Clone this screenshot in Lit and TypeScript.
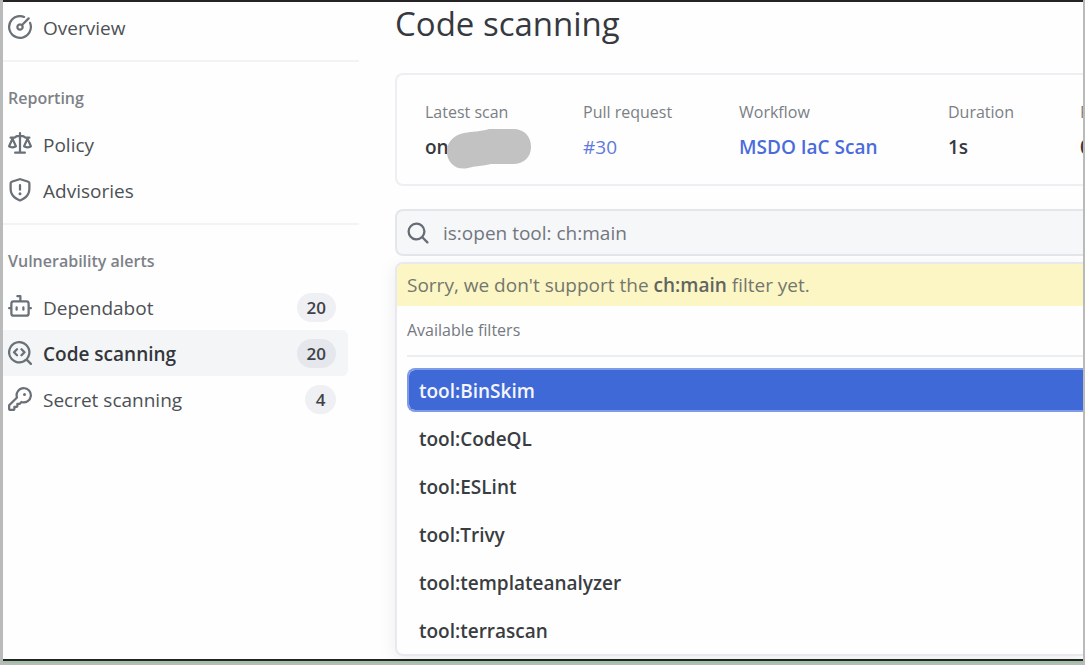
import { LitElement, html, css, svg } from "lit";
import { customElement, property, state } from "lit/decorators.js";

const ICONS: Record<string, string> = {
  meter:
    "M8 1.5a6.5 6.5 0 1 0 6.016 4.035.75.75 0 0 1 1.388-.57 8 8 0 1 1-4.37-4.37.75.75 0 0 1-.569 1.389A6.479 6.479 0 0 0 8 1.5Zm6.28.22a.75.75 0 0 1 0 1.06l-4.063 4.064a2.5 2.5 0 1 1-1.06-1.06L13.22 1.72a.75.75 0 0 1 1.06 0ZM7 8a1 1 0 1 0 2 0 1 1 0 0 0-2 0Z",
  law: "M8.75.75V2h.985c.304 0 .603.08.867.231l1.29.736c.038.022.08.033.124.033h2.234a.75.75 0 0 1 0 1.5h-.427l2.111 4.692a.75.75 0 0 1-.154.838l-.53-.53.529.531-.001.002-.002.002-.006.006-.006.005-.01.01-.045.04c-.21.176-.441.327-.686.45C14.556 10.78 13.88 11 13 11a4.498 4.498 0 0 1-2.023-.454 3.544 3.544 0 0 1-.686-.45l-.045-.04-.016-.015-.006-.006-.004-.004v-.001a.75.75 0 0 1-.154-.838L12.178 4.5h-.162c-.305 0-.604-.079-.868-.231l-1.29-.736a.245.245 0 0 0-.124-.033H8.75V13h2.5a.75.75 0 0 1 0 1.5h-6.5a.75.75 0 0 1 0-1.5h2.5V3.5h-.984a.245.245 0 0 0-.124.033l-1.289.737c-.265.15-.564.23-.869.23h-.162l2.112 4.692a.75.75 0 0 1-.154.838l-.53-.53.529.531-.001.002-.002.002-.006.006-.016.015-.045.04c-.21.176-.441.327-.686.45C4.556 10.78 3.88 11 3 11a4.498 4.498 0 0 1-2.023-.454 3.544 3.544 0 0 1-.686-.45l-.045-.04-.016-.015-.006-.006-.004-.004v-.001a.75.75 0 0 1-.154-.838L2.178 4.5H1.75a.75.75 0 0 1 0-1.5h2.234a.249.249 0 0 0 .125-.033l1.288-.737c.265-.15.564-.23.869-.23h.984V.75a.75.75 0 0 1 1.5 0Zm2.945 8.477c.285.135.718.273 1.305.273s1.02-.138 1.305-.273L13 6.327Zm-10 0c.285.135.718.273 1.305.273s1.02-.138 1.305-.273L3 6.327Z",
  shield:
    "M7.467.133a1.748 1.748 0 0 1 1.066 0l5.25 1.68A1.75 1.75 0 0 1 15 3.48V7c0 1.566-.32 3.182-1.303 4.682-.983 1.498-2.585 2.813-5.032 3.855a1.697 1.697 0 0 1-1.33 0c-2.447-1.042-4.049-2.357-5.032-3.855C1.32 10.182 1 8.566 1 7V3.48a1.75 1.75 0 0 1 1.217-1.667Zm.61 1.429a.25.25 0 0 0-.153 0l-5.25 1.68a.25.25 0 0 0-.174.238V7c0 1.358.275 2.666 1.057 3.86.784 1.194 2.121 2.34 4.366 3.297a.196.196 0 0 0 .154 0c2.245-.956 3.582-2.104 4.366-3.298C13.225 9.666 13.5 8.36 13.5 7V3.48a.251.251 0 0 0-.174-.237l-5.25-1.68ZM8.75 4.75v3a.75.75 0 0 1-1.5 0v-3a.75.75 0 0 1 1.5 0ZM9 10.5a1 1 0 1 1-2 0 1 1 0 0 1 2 0Z",
  dependabot:
    "M5.75 7.5a.75.75 0 0 1 .75.75v1.5a.75.75 0 0 1-1.5 0v-1.5a.75.75 0 0 1 .75-.75Zm5.25.75a.75.75 0 0 0-1.5 0v1.5a.75.75 0 0 0 1.5 0v-1.5ZM6.25 0h2A.75.75 0 0 1 9 .75V3.5h3.25a2.25 2.25 0 0 1 2.25 2.25V8h.75a.75.75 0 0 1 0 1.5h-.75v2.75a2.25 2.25 0 0 1-2.25 2.25h-8.5a2.25 2.25 0 0 1-2.25-2.25V9.5H.75a.75.75 0 0 1 0-1.5h.75V5.75A2.25 2.25 0 0 1 3.75 3.5H7.5v-2H6.25a.75.75 0 0 1 0-1.5ZM3 5.75v6.5c0 .414.336.75.75.75h8.5a.75.75 0 0 0 .75-.75v-6.5a.75.75 0 0 0-.75-.75h-8.5a.75.75 0 0 0-.75.75Z",
  codescan:
    "M8.47 4.97a.75.75 0 0 0 0 1.06L9.94 7.5 8.47 8.97a.75.75 0 1 0 1.06 1.06l2-2a.75.75 0 0 0 0-1.06l-2-2a.75.75 0 0 0-1.06 0ZM6.53 6.03a.75.75 0 0 0-1.06-1.06l-2 2a.75.75 0 0 0 0 1.06l2 2a.75.75 0 1 0 1.06-1.06L5.06 7.5l1.47-1.47ZM12.246 13.307a7.501 7.501 0 1 1 1.06-1.06l2.474 2.473a.749.749 0 1 1-1.06 1.06ZM1.5 7.5a6.002 6.002 0 0 0 3.608 5.504 6.002 6.002 0 0 0 6.486-1.117.748.748 0 0 1 .292-.293A6 6 0 1 0 1.5 7.5Z",
  key: "M10.5 0a5.499 5.499 0 1 1-1.288 10.848l-.932.932a.749.749 0 0 1-.53.22H7v.75a.749.749 0 0 1-.22.53l-.5.5a.749.749 0 0 1-.53.22H5v.75a.749.749 0 0 1-.22.53l-.5.5a.749.749 0 0 1-.53.22h-2A1.75 1.75 0 0 1 0 14.25v-2c0-.199.079-.389.22-.53l4.932-4.932A5.5 5.5 0 0 1 10.5 0Zm-4 5.5c-.001.431.069.86.205 1.269a.75.75 0 0 1-.181.768L1.5 12.56v1.69c0 .138.112.25.25.25h1.69l.06-.06v-1.19a.75.75 0 0 1 .75-.75h1.19l.06-.06v-1.19a.75.75 0 0 1 .75-.75h1.19l1.023-1.025a.75.75 0 0 1 .768-.18A4 4 0 1 0 6.5 5.5ZM11 6a1 1 0 1 1 0-2 1 1 0 0 1 0 2Z",
  search:
    "M10.68 11.74a6 6 0 0 1-7.922-8.982 6 6 0 0 1 8.982 7.922l3.04 3.04a.749.749 0 1 1-1.06 1.06ZM11.5 7a4.499 4.499 0 1 0-8.997 0A4.499 4.499 0 0 0 11.5 7Z",
};

const icon = (name: string) => html`<svg
  class="icon"
  viewBox="0 0 16 16"
  aria-hidden="true"
>
  ${svg`<path fill="currentColor" fill-rule="evenodd" d=${ICONS[name]}></path>`}
</svg>`;

@customElement("side-nav")
export class SideNav extends LitElement {
  @property() current = "Code scanning";

  static styles = css`
    :host {
      display: block;
      padding-top: 2px;
    }
    .group {
      display: flex;
      flex-direction: column;
    }
    .group + .group {
      margin-top: 10px;
      border-top: 2px solid #f3f3f4;
      padding-top: 24px;
    }
    .title {
      margin: 0 0 11px;
      padding-left: 5px;
      font-size: 16px;
      line-height: 24px;
      font-weight: 600;
      color: #7d8187;
    }
    .item {
      display: flex;
      align-items: center;
      gap: 11px;
      height: 46px;
      margin-right: 11px;
      padding: 0 12px 0 5px;
      border-radius: 0 6px 6px 0;
      font-size: 19px;
      color: #4d5155;
      text-decoration: none;
    }
    .item.active {
      background: #f4f5f7;
      color: #33373c;
      font-weight: 600;
    }
    .icon {
      width: 24px;
      height: 24px;
      flex: none;
      color: #6a7077;
    }
    .label {
      flex: 1;
      padding-top: 2px;
    }
    .count {
      min-width: 31px;
      padding: 0 10px;
      box-sizing: border-box;
      border-radius: 15px;
      background: #eff0f3;
      color: #3f4347;
      font-size: 17px;
      line-height: 29px;
      font-weight: 600;
      text-align: center;
    }
    .active .count {
      background: #e6e7ec;
    }
  `;

  private groups = [
    { title: "", items: [{ icon: "meter", label: "Overview" }] },
    {
      title: "Reporting",
      items: [
        { icon: "law", label: "Policy" },
        { icon: "shield", label: "Advisories" },
      ],
    },
    {
      title: "Vulnerability alerts",
      items: [
        { icon: "dependabot", label: "Dependabot", count: 20 },
        { icon: "codescan", label: "Code scanning", count: 20 },
        { icon: "key", label: "Secret scanning", count: 4 },
      ],
    },
  ] as { title: string; items: { icon: string; label: string; count?: number }[] }[];

  render() {
    return html`<nav aria-label="Security">
      ${this.groups.map(
        (g) => html`<div class="group">
          ${g.title ? html`<h2 class="title">${g.title}</h2>` : ""}
          ${g.items.map(
            (i) => html`<a
              class="item ${i.label === this.current ? "active" : ""}"
              href="#"
              >${icon(i.icon)}<span class="label">${i.label}</span>${i.count
                ? html`<span class="count">${i.count}</span>`
                : ""}</a
            >`
          )}
        </div>`
      )}
    </nav>`;
  }
}

@customElement("scan-summary")
export class ScanSummary extends LitElement {
  static styles = css`
    .card {
      display: grid;
      grid-template-columns: 158px 156px 209px 132px 1fr;
      margin: 0;
      padding: 25px 0 22px 28px;
      border: 2px solid #eeeef3;
      border-right: 0;
      border-radius: 8px 0 0 8px;
    }
    .stat {
      min-width: 0;
      white-space: nowrap;
    }
    .name {
      font-size: 16px;
      line-height: 24px;
      color: #7b7f85;
    }
    .value {
      display: flex;
      align-items: center;
      margin: 8px 0 0;
      height: 30px;
      font-size: 19px;
      font-weight: 600;
      color: #36393e;
    }
    .link {
      color: #4a6bdc;
      text-decoration: none;
    }
    .light {
      font-weight: 500;
      color: #6079dc;
    }
    .redaction {
      width: 86px;
      height: 44px;
      flex: none;
      margin: 0 0 0 -3px;
    }
  `;

  render() {
    return html`<dl class="card">
      <div class="stat">
        <dt class="name">Latest scan</dt>
        <dd class="value">
          on<svg class="redaction" viewBox="0 0 86 44" aria-hidden="true">
            <path
              fill="#c2c2c2"
              d="M1 25C2 16 8 10 18 8C27 6 34 7 43 4H67C79 4 85 12 85 22S78 39 67 39H45C37 41 29 41 22 43C10 46 0 37 1 25Z"
            />
          </svg>
        </dd>
      </div>
      <div class="stat">
        <dt class="name">Pull request</dt>
        <dd class="value"><a class="link light" href="#">#30</a></dd>
      </div>
      <div class="stat">
        <dt class="name">Workflow</dt>
        <dd class="value"><a class="link" href="#">MSDO IaC Scan</a></dd>
      </div>
      <div class="stat">
        <dt class="name">Duration</dt>
        <dd class="value">1s</dd>
      </div>
      <div class="stat">
        <dt class="name">R</dt>
        <dd class="value">0</dd>
      </div>
    </dl>`;
  }
}

@customElement("filter-search")
export class FilterSearch extends LitElement {
  @state() private selected = 0;

  private options = [
    "tool:BinSkim",
    "tool:CodeQL",
    "tool:ESLint",
    "tool:Trivy",
    "tool:templateanalyzer",
    "tool:terrascan",
  ];

  static styles = css`
    .box {
      display: flex;
      align-items: center;
      gap: 13px;
      height: 43px;
      padding-left: 9px;
      border: 2px solid #e5e6eb;
      border-right: 0;
      border-radius: 8px 0 0 8px;
      background: #f6f7f9;
    }
    .icon {
      width: 24px;
      height: 24px;
      flex: none;
      color: #666c73;
    }
    .input {
      flex: 1;
      min-width: 0;
      padding: 0;
      border: 0;
      outline: 0;
      background: none;
      font: inherit;
      font-size: 19px;
      color: #71767f;
    }
    .panel {
      margin-top: 6px;
      padding-bottom: 2px;
      border: 2px solid #e8e9ee;
      border-right: 0;
      border-radius: 8px 0 0 8px;
      background: #fefefe;
      box-shadow: 0 4px 16px rgba(120, 130, 140, 0.14);
      overflow: hidden;
    }
    .notice {
      margin: 0;
      padding-left: 10px;
      background: #fbf6c4;
      font-size: 19px;
      line-height: 42px;
      color: #74766f;
    }
    .term {
      font-weight: 600;
      color: #62645f;
    }
    .heading {
      margin: 0 0 11px 10px;
      padding: 12px 0;
      border-bottom: 2px solid #ebeff2;
      font-size: 16px;
      line-height: 25px;
      font-weight: 400;
      color: #74797f;
    }
    .options {
      display: flex;
      flex-direction: column;
      gap: 4px;
      margin-left: 10px;
    }
    .option {
      height: 44px;
      padding: 1px 0 0 10px;
      border: 2px solid transparent;
      border-right: 0;
      border-radius: 8px 0 0 8px;
      background: none;
      font: inherit;
      font-size: 19px;
      font-weight: 600;
      text-align: left;
      color: #393d42;
    }
    .option.selected {
      border-color: #7f9ae6;
      background: #3f69d7;
      background-clip: padding-box;
      color: #f4f6fd;
    }
  `;

  render() {
    return html`<label class="box"
        >${icon("search")}<input
          class="input"
          aria-label="Search alerts"
          .value=${"is:open tool: ch:main"}
      /></label>
      <div class="panel">
        <p class="notice">
          Sorry, we don't support the <b class="term">ch:main</b> filter yet.
        </p>
        <h2 class="heading">Available filters</h2>
        <div class="options" role="listbox" aria-label="Available filters">
          ${this.options.map(
            (o, n) => html`<button
              class="option ${n === this.selected ? "selected" : ""}"
              role="option"
              aria-selected=${n === this.selected}
              @click=${() => (this.selected = n)}
            >
              ${o}
            </button>`
          )}
        </div>
      </div>`;
  }
}

@customElement("app-root")
export class AppRoot extends LitElement {
  static styles = css`
    :host {
      display: block;
      font-family: "Open Sans", "Noto Sans", sans-serif;
    }
    .frame {
      display: flex;
      flex-direction: column;
      box-sizing: border-box;
      height: 100vh;
      padding: 0 2px 2px 3px;
      background: #b9bbbb;
    }
    .page {
      flex: 1;
      min-height: 0;
      display: grid;
      grid-template-columns: 356px minmax(0, 1fr);
      column-gap: 36px;
      border-top: 2px solid #252325;
      border-bottom: 2px solid #252325;
      background: #fefefe;
      overflow: hidden;
    }
    .strip {
      height: 2px;
      background: #9cc3a2;
    }
    .title {
      margin: 0 0 27px;
      font-size: 33px;
      line-height: 44px;
      font-weight: 400;
      color: #36393f;
    }
    .search {
      display: block;
      margin-top: 23px;
    }
  `;

  render() {
    return html`<div class="frame">
      <div class="page">
        <side-nav></side-nav>
        <main>
          <h1 class="title">Code scanning</h1>
          <scan-summary></scan-summary>
          <filter-search class="search"></filter-search>
        </main>
      </div>
      <div class="strip"></div>
    </div>`;
  }
}
